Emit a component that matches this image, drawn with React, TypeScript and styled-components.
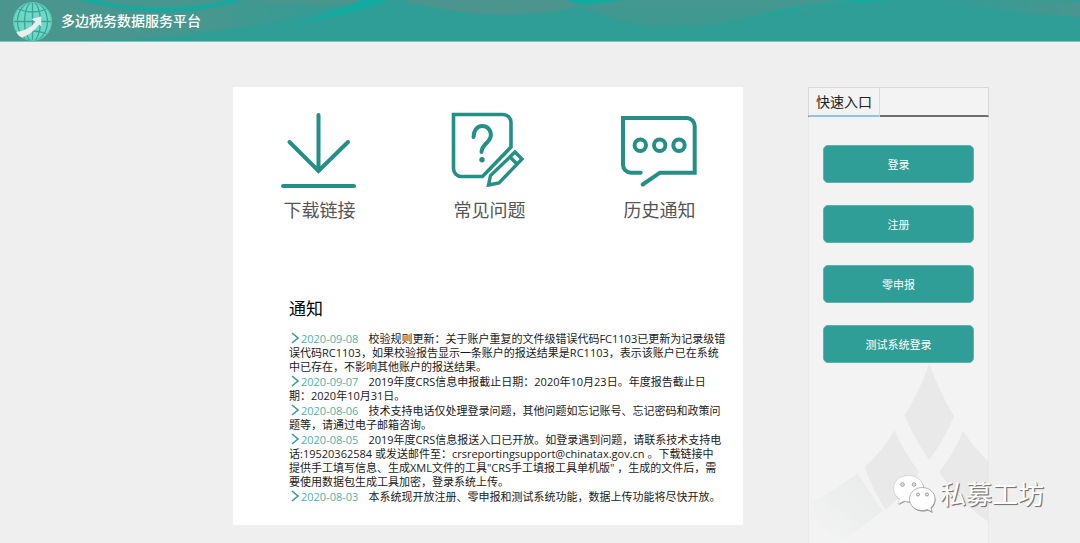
import React from "react";
import styled, { createGlobalStyle } from "styled-components";

const GlobalStyle = createGlobalStyle`
  *, *::before, *::after { box-sizing: border-box; }
  body {
    margin: 0;
    background: #efefef;
    color: #1a1a1a;
    font-family: "Open Sans", "Noto Sans CJK SC", sans-serif;
    font-size: 11px;
    line-height: 14px;
  }
`;

const teal = "#2f9e97";
const iconTeal = "#248f86";

const Page = styled.div`
  position: relative;
  min-height: 100vh;
  display: flex;
  flex-direction: column;
`;

const Header = styled.header`
  position: relative;
  display: flex;
  align-items: center;
  gap: 9px;
  height: 42px;
  padding-left: 12px;
  background: ${teal};
  border-bottom: 1px solid #7fc4bf;
  overflow: hidden;
`;

const Waves = styled.svg`
  position: absolute;
  inset: 0;
  width: 100%;
  height: 100%;
`;

const Logo = styled.svg`
  position: relative;
  width: 40px;
  height: 40px;
`;

const SiteTitle = styled.h1`
  position: relative;
  margin: 0;
  color: #fff;
  font-size: 14px;
  font-weight: 500;
  line-height: 20px;
`;

const Main = styled.main`
  flex: 1;
  display: grid;
  grid-template-columns: minmax(0, 1fr) 181px;
  gap: 65px;
  padding: 45px 91px 0 233px;
`;

const Card = styled.section`
  align-self: start;
  margin-bottom: 18px;
  padding: 23px 0 21px;
  background: #fff;
`;

const Shortcuts = styled.nav`
  display: grid;
  grid-template-columns: repeat(3, 1fr);
`;

const Shortcut = styled.a`
  display: flex;
  flex-direction: column;
  align-items: center;
  gap: 8px;
  color: #555;
  font-size: 18px;
  line-height: 24px;
  text-decoration: none;
`;

const ShortcutLabel = styled.span`
  padding-left: 3px;
`;

const ShortcutIcon = styled.svg`
  width: 80px;
  height: 80px;
  fill: none;
  stroke: ${iconTeal};
  stroke-width: 4;
`;

const Notices = styled.div`
  padding: 75px 0 0 56px;
`;

const NoticesTitle = styled.h2`
  margin: 0 0 11px;
  color: #000;
  font-size: 17px;
  font-weight: 400;
  line-height: 24px;
`;

const NoticeList = styled.ul`
  display: grid;
  gap: 1px;
  margin: 0;
  padding: 0;
  list-style: none;
  white-space: nowrap;
`;

const Chevron = styled.svg`
  width: 12px;
  height: 12px;
  padding-right: 1px;
  vertical-align: -1px;
  fill: none;
  stroke: #3a9a93;
  stroke-width: 1.6;
`;

const NoticeDate = styled.time`
  margin-right: 10px;
  color: #4fb0a9;
`;

const Sidebar = styled.aside`
  border: 1px solid #e9e9e9;
  border-bottom: 0;
  background: #f3f3f3;
`;

const TabBar = styled.div`
  display: flex;
  margin: -1px -1px 0;
  border: 1px solid #d8d8d8;
  border-bottom: 2px solid #6e6e6e;
`;

const Tab = styled.button`
  margin-bottom: -2px;
  padding: 0 7px;
  border: 0;
  border-right: 1px solid #dcdcdc;
  border-bottom: 2px solid #8cc4e6;
  background: #f3f3f3;
  color: #222;
  font: inherit;
  font-size: 14px;
  line-height: 27px;
`;

const Actions = styled.div`
  display: grid;
  gap: 22px;
  padding: 28px 14px 0;
`;

const ActionButton = styled.button`
  height: 38px;
  padding: 1px 0 0;
  border: 1px solid #5bb3ad;
  border-radius: 5px;
  background: ${teal};
  color: #fff;
  font: inherit;
`;

const Diamonds = styled.svg`
  display: block;
  width: 100%;
  height: 180px;
`;

const Watermark = styled.div`
  position: absolute;
  right: 36px;
  bottom: 29px;
  display: flex;
  align-items: center;
  gap: 4px;
  color: #fff;
  font-size: 26px;
  line-height: 36px;
  text-shadow: 1px 1px 1px #777, 1px 1px 0 #888;
`;

const WatermarkIcon = styled.svg`
  width: 44px;
  height: 40px;
`;

const notices: { date: string; lines: string[] }[] = [
  {
    date: "2020-09-08",
    lines: [
      "校验规则更新：关于账户重复的文件级错误代码FC1103已更新为记录级错",
      "误代码RC1103，如果校验报告显示一条账户的报送结果是RC1103，表示该账户已在系统",
      "中已存在，不影响其他账户的报送结果。",
    ],
  },
  {
    date: "2020-09-07",
    lines: [
      "2019年度CRS信息申报截止日期：2020年10月23日。年度报告截止日",
      "期：2020年10月31日。",
    ],
  },
  {
    date: "2020-08-06",
    lines: [
      "技术支持电话仅处理登录问题，其他问题如忘记账号、忘记密码和政策问",
      "题等，请通过电子邮箱咨询。",
    ],
  },
  {
    date: "2020-08-05",
    lines: [
      "2019年度CRS信息报送入口已开放。如登录遇到问题，请联系技术支持电",
      "话:19520362584 或发送邮件至：crsreportingsupport@chinatax.gov.cn 。下载链接中",
      "提供手工填写信息、生成XML文件的工具\"CRS手工填报工具单机版\" ，生成的文件后，需",
      "要使用数据包生成工具加密，登录系统上传。",
    ],
  },
  {
    date: "2020-08-03",
    lines: ["本系统现开放注册、零申报和测试系统功能，数据上传功能将尽快开放。"],
  },
];

const actions = ["登录", "注册", "零申报", "测试系统登录"];

function HeaderWaves() {
  return (
    <Waves viewBox="0 0 1080 41" preserveAspectRatio="none" aria-hidden="true">
      <defs>
        <linearGradient id="haze" x1="0" y1="0" x2="0" y2="1">
          <stop offset="0" stopColor="#4b958e" />
          <stop offset="1" stopColor="#43978f" />
        </linearGradient>
        <linearGradient id="fadeOut" x1="0" y1="0" x2="1" y2="0">
          <stop offset="0" stopColor="#4b958e" />
          <stop offset="0.6" stopColor="#45978f" />
          <stop offset="1" stopColor="#2f9e97" />
        </linearGradient>
        <linearGradient id="fadeIn" x1="0" y1="0" x2="1" y2="0">
          <stop offset="0" stopColor="#2f9e97" />
          <stop offset="1" stopColor="#48968f" />
        </linearGradient>
        <linearGradient id="ribbon" x1="0" y1="0" x2="1" y2="0">
          <stop offset="0" stopColor="#12ab9f" stopOpacity="0" />
          <stop offset="0.5" stopColor="#12ab9f" />
          <stop offset="1" stopColor="#12ab9f" />
        </linearGradient>
      </defs>
      <path d="M0 0H360Q310 17 240 27Q130 45 0 41Z" fill="url(#fadeOut)" />
      <path d="M243 0Q310 9 358 5L375 0Z" fill="url(#haze)" />
      <path d="M80 0Q165 24 243 0H229Q165 16 95 0Z" fill="#12ab9f" />
      <path d="M280 26Q350 17 388 0H362Q330 14 280 26Z" fill="url(#ribbon)" />
      <path d="M400 0Q500 26 582 6L568 0Z" fill="#4b958e" />
      <path d="M580 6Q650 33 720 24Q790 12 870 0H566Z" fill="url(#haze)" opacity="0.75" />
      <path d="M580 6Q640 30 680 26" fill="none" stroke="#4b958e" />
      <path d="M566 0H625L582 5Z" fill="#12ab9f" />
      <path d="M660 26Q740 23 800 9Q840 2 900 0H860Q810 3 760 15Q710 24 660 26Z" fill="url(#ribbon)" />
      <path d="M930 0Q1000 12 1080 17V2Q1060 1 1040 0Z" fill="url(#fadeIn)" />
    </Waves>
  );
}

function GlobeLogo() {
  return (
    <Logo viewBox="0 0 40 40" aria-hidden="true">
      <defs>
        <clipPath id="globe">
          <circle cx="20.5" cy="20.5" r="19.5" />
        </clipPath>
      </defs>
      <circle cx="20.5" cy="20.5" r="19.3" fill="#6fd8c4" />
      <g clipPath="url(#globe)" fill="none" stroke="#37a699" strokeWidth="1.3">
        <path d="M20.5 1V40M1 20.5H40" />
        <ellipse cx="20.5" cy="20.5" rx="8" ry="19.3" />
        <ellipse cx="20.5" cy="20.5" rx="15" ry="19.3" />
        <path d="M6 8Q20.5 14 35 8M6 33Q20.5 27 35 33" />
        <circle cx="20.5" cy="20.5" r="19" stroke="#59c5b2" />
      </g>
      <path d="M4.500 31Q17 29 23.500 21L19.500 18L29 15.500L29.500 25.500L27 23.500Q20 33 10 36.500Q6 35 4.500 31Z" fill="#eceeed" />
    </Logo>
  );
}

export default function App() {
  return (
    <Page>
      <GlobalStyle />
      <Header>
        <HeaderWaves />
        <GlobeLogo />
        <SiteTitle>多边税务数据服务平台</SiteTitle>
      </Header>
      <Main>
        <Card>
          <Shortcuts>
            <Shortcut href="#download">
              <ShortcutIcon viewBox="0 0 80 80" strokeLinecap="round" aria-hidden="true">
                <path d="M40.500 5V61M11.500 32L40.500 61L70 32M5 76H76" />
              </ShortcutIcon>
              <ShortcutLabel>下载链接</ShortcutLabel>
            </Shortcut>
            <Shortcut href="#faq">
              <ShortcutIcon viewBox="0 0 80 80" aria-hidden="true">
                <path strokeWidth="3.600" d="M5.500 4.500H55a8 8 0 0 1 8 8V37L34.500 66.500H13.500a8 8 0 0 1-8-8Z" />
                <path strokeLinecap="round" d="M25.500 27c0-6 3.500-11 8.700-11s8.700 4 8.700 9c0 7.500-9.400 9-9.400 17" />
                <circle cx="34" cy="49.700" r="2.700" fill={iconTeal} stroke="none" />
                <path strokeWidth="3.400" d="M67 42L74 49L51 73L40.500 75L42.500 65.500ZM62 47L69 54" />
              </ShortcutIcon>
              <ShortcutLabel>常见问题</ShortcutLabel>
            </Shortcut>
            <Shortcut href="#history">
              <ShortcutIcon viewBox="0 0 80 80" aria-hidden="true">
                <path strokeLinecap="round" d="M22.700 62.700H13a8 8 0 0 1-8-8V8H68.700a8 8 0 0 1 8 8V62.700H42L24.700 74.500" />
                <circle cx="22.300" cy="35.300" r="5.700" />
                <circle cx="41.700" cy="35.300" r="5.700" />
                <circle cx="61" cy="35.300" r="5.700" />
              </ShortcutIcon>
              <ShortcutLabel>历史通知</ShortcutLabel>
            </Shortcut>
          </Shortcuts>
          <Notices>
            <NoticesTitle>通知</NoticesTitle>
            <NoticeList>
              {notices.map((notice) => (
                <li key={notice.date}>
                  <Chevron viewBox="0 0 11 12" aria-hidden="true">
                    <path d="M3 1L9 6L3 11" />
                  </Chevron>
                  <NoticeDate dateTime={notice.date}>{notice.date}</NoticeDate>
                  {notice.lines.map((line, index) => (
                    <React.Fragment key={line}>
                      {index > 0 && <br />}
                      {line}
                    </React.Fragment>
                  ))}
                </li>
              ))}
            </NoticeList>
          </Notices>
        </Card>
        <Sidebar>
          <TabBar>
            <Tab type="button">快速入口</Tab>
          </TabBar>
          <Actions>
            {actions.map((label) => (
              <ActionButton key={label} type="button">
                {label}
              </ActionButton>
            ))}
          </Actions>
          <Diamonds viewBox="0 0 180 180" aria-hidden="true">
            <defs>
              <linearGradient id="corner" x1="1" y1="0" x2="0" y2="1">
                <stop offset="0" stopColor="#e9eaea" />
                <stop offset="0.5" stopColor="#edefee" />
                <stop offset="0.9" stopColor="#f3f3f3" />
              </linearGradient>
            </defs>
            <g fill="#e9e9e9">
              <path d="M121 0Q131 29 146 53Q136 76 121 97Q106 76 96 52Q112 27 121 0Z" />
              <path d="M86 67Q95 89 111 109Q98 130 77 147Q63 125 56 104Q74 88 86 67Z" />
              <path d="M155 68Q165 84 180 98V159Q150 138 131 109Q146 90 155 68Z" />
              <path d="M49 110Q61 130 74 148Q54 165 32 178Q16 170 1 154V140Q26 128 49 110Z" fill="url(#corner)" />
            </g>
          </Diamonds>
        </Sidebar>
      </Main>
      <Watermark>
        <WatermarkIcon viewBox="0 0 44 40" aria-hidden="true">
          <g fill="#999" transform="translate(0.800 1)">
            <path d="M16.500 1.500C8 1.500 1.500 7 1.500 14.500C1.500 19 4 22.500 7.500 25L6 30L12 27Q18 28.500 23 26.500C29 24 31.500 19.500 31.500 14.500C31.500 7 25 1.500 16.500 1.500Z" />
          </g>
          <path fill="#fff" stroke="#bbb" strokeWidth="0.500" d="M16.500 1.500C8 1.500 1.500 7 1.500 14.500C1.500 19 4 22.500 7.500 25L6 30L12 27Q18 28.500 23 26.500C29 24 31.500 19.500 31.500 14.500C31.500 7 25 1.500 16.500 1.500Z" />
          <path fill="#888" transform="translate(0.500 0.900)" d="M30.300 13.500C23 13.500 17.500 18.500 17.500 25C17.500 31.500 23 36.500 30.300 36.500Q33 36.500 35.500 35.500L40 38L39 33.500C41.500 31.500 43 28.500 43 25C43 18.500 37.500 13.500 30.300 13.500Z" />
          <path fill="#fff" stroke="#999" strokeWidth="0.700" d="M30.300 13.500C23 13.500 17.500 18.500 17.500 25C17.500 31.500 23 36.500 30.300 36.500Q33 36.500 35.500 35.500L40 38L39 33.500C41.500 31.500 43 28.500 43 25C43 18.500 37.500 13.500 30.300 13.500Z" />
          <g fill="#e4e4e4" stroke="#8a8a8a" strokeWidth="0.800">
            <circle cx="10.500" cy="10.500" r="1.800" />
            <circle cx="22" cy="10.500" r="1.800" />
            <circle cx="26" cy="20.500" r="1.500" />
            <circle cx="35" cy="20.500" r="1.500" />
          </g>
        </WatermarkIcon>
        私募工坊
      </Watermark>
    </Page>
  );
}
